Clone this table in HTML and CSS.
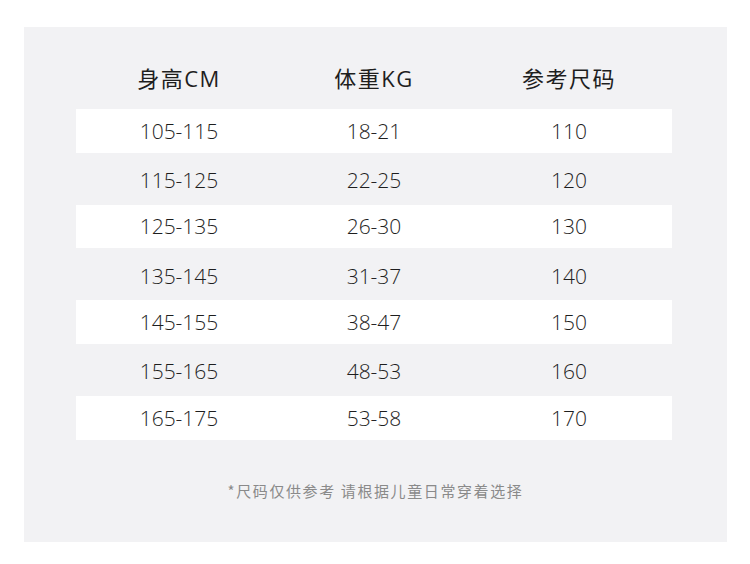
FILE: index.html
```html
<!DOCTYPE html>
<html lang="zh">
<head>
<meta charset="utf-8">
<title>尺码表</title>
<link rel="stylesheet" href="styles.css">
</head>
<body>
<div class="panel">
  <div class="head">
    <div>身高CM</div>
    <div>体重KG</div>
    <div>参考尺码</div>
  </div>
  <div class="table">
    <div class="row odd"><div>105-115</div><div>18-21</div><div>110</div></div>
    <div class="row even"><div>115-125</div><div>22-25</div><div>120</div></div>
    <div class="row odd"><div>125-135</div><div>26-30</div><div>130</div></div>
    <div class="row even"><div>135-145</div><div>31-37</div><div>140</div></div>
    <div class="row odd"><div>145-155</div><div>38-47</div><div>150</div></div>
    <div class="row even"><div>155-165</div><div>48-53</div><div>160</div></div>
    <div class="row odd"><div>165-175</div><div>53-58</div><div>170</div></div>
  </div>
  <div class="note">*尺码仅供参考 请根据儿童日常穿着选择</div>
</div>
</body>
</html>
```

FILE: styles.css
```css
html, body {
  margin: 0;
  padding: 0;
  background: #ffffff;
}
body {
  width: 750px;
  height: 564px;
  font-family: "Open Sans", "Noto Sans CJK SC", sans-serif;
  color: #222222;
}
.panel {
  margin: 27px 0 0 24px;
  width: 703px;
  height: 515px;
  background: #f2f2f4;
  box-sizing: border-box;
  padding-top: 27px;
}
.head {
  display: grid;
  grid-template-columns: repeat(3, 195px);
  justify-content: center;
  width: 596px;
  margin-left: 52px;
  height: 46px;
  align-items: center;
  font-size: 22px;
  letter-spacing: 1.5px;
  font-weight: 400;
  color: #1e1e1e;
  margin-bottom: 9px;
}
.head div, .row div {
  text-align: center;
}
.table {
  width: 596px;
  margin-left: 52px;
  display: flex;
  flex-direction: column;
}
.row {
  display: grid;
  grid-template-columns: repeat(3, 195px);
  justify-content: center;
  align-items: center;
  font-size: 21px;
  font-weight: 300;
  color: #1e1e1e;
}
.row.odd {
  height: 43.5px;
  background: #ffffff;
}
.row.even {
  height: 52.2px;
  padding-top: 3px;
  box-sizing: border-box;
}
.note {
  margin-top: 40px;
  text-align: center;
  font-family: "Noto Sans CJK SC", sans-serif;
  font-size: 15px;
  letter-spacing: 1.6px;
  color: #8a8a8a;
  padding-left: 0;
}
```
